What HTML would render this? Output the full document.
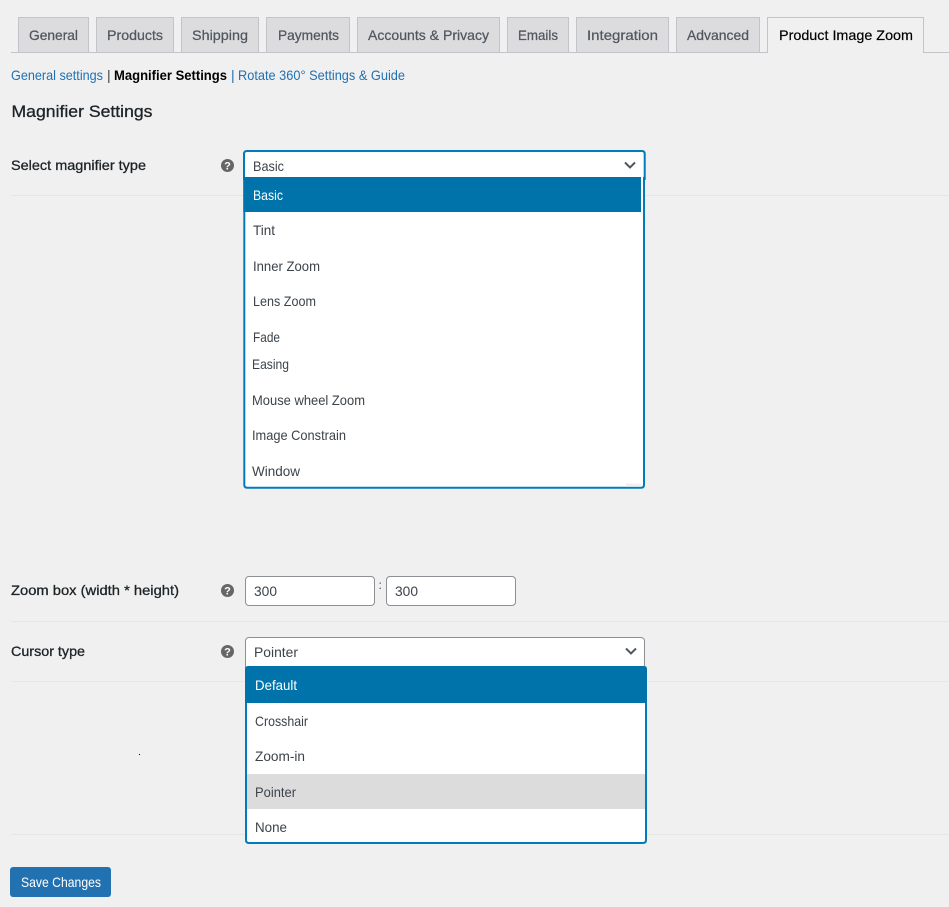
<!DOCTYPE html>
<html lang="en">
<head>
<meta charset="utf-8">
<title>Magnifier Settings</title>
<style>
html,body{margin:0;padding:0;background:#f0f0f1;}
body{width:949px;height:907px;overflow:hidden;}
svg{display:block;}
text{font-family:"Liberation Sans",sans-serif;font-size:14px;fill:#3c434a;}
.tab{fill:#50575e;font-weight:400;stroke:#50575e;stroke-width:.25;}
.tabbox{fill:#dcdcde;stroke:#c3c4c7;stroke-width:1;}
.lnk{fill:#2271b1;}
.lbl{fill:#1d2327;stroke:#1d2327;stroke-width:.3;}
.help{fill:#fff;font-size:11px;font-weight:700;}
.row{stroke:#e6e6e7;stroke-width:1;}
</style>
</head>
<body>
<svg width="949" height="907" viewBox="0 0 949 907" xmlns="http://www.w3.org/2000/svg">
<rect width="949" height="907" fill="#f0f0f1"/>

<!-- tabs -->
<line x1="11" y1="52.5" x2="949" y2="52.5" stroke="#c3c4c7"/>
<rect class="tabbox" x="18.5" y="17.5" width="70" height="35"/>
<rect class="tabbox" x="96.5" y="17.5" width="77" height="35"/>
<rect class="tabbox" x="181.5" y="17.5" width="77" height="35"/>
<rect class="tabbox" x="266.5" y="17.5" width="83" height="35"/>
<rect class="tabbox" x="357.5" y="17.5" width="142" height="35"/>
<rect class="tabbox" x="507.5" y="17.5" width="61" height="35"/>
<rect class="tabbox" x="576.5" y="17.5" width="92" height="35"/>
<rect class="tabbox" x="676.5" y="17.5" width="83" height="35"/>
<path d="M767.5 53V17.5H923.5V53" fill="#f0f0f1" stroke="#c3c4c7"/>
<rect x="768" y="50" width="155" height="4" fill="#f0f0f1"/>
<text class="tab" x="29" y="40" textLength="49" lengthAdjust="spacingAndGlyphs">General</text>
<text class="tab" x="107" y="40" textLength="56" lengthAdjust="spacingAndGlyphs">Products</text>
<text class="tab" x="192" y="40" textLength="56" lengthAdjust="spacingAndGlyphs">Shipping</text>
<text class="tab" x="278" y="40" textLength="61" lengthAdjust="spacingAndGlyphs">Payments</text>
<text class="tab" x="368" y="40" textLength="121" lengthAdjust="spacingAndGlyphs">Accounts &amp; Privacy</text>
<text class="tab" x="518" y="40" textLength="40" lengthAdjust="spacingAndGlyphs">Emails</text>
<text class="tab" x="587" y="40" textLength="71" lengthAdjust="spacingAndGlyphs">Integration</text>
<text class="tab" x="687" y="40" textLength="62" lengthAdjust="spacingAndGlyphs">Advanced</text>
<text x="779" y="40" textLength="134" lengthAdjust="spacingAndGlyphs" style="fill:#000;stroke:#000;stroke-width:.2">Product Image Zoom</text>

<!-- subnav -->
<text class="lnk" x="11" y="80" textLength="92" lengthAdjust="spacingAndGlyphs">General settings</text>
<text x="107" y="80" fill="#50575e">|</text>
<text x="114" y="80" textLength="113" lengthAdjust="spacingAndGlyphs" style="fill:#000;font-weight:700">Magnifier Settings</text>
<text x="231" y="80" class="lnk">|</text>
<text class="lnk" x="238" y="80" textLength="167" lengthAdjust="spacingAndGlyphs">Rotate 360° Settings &amp; Guide</text>

<!-- heading -->
<text x="11.5" y="117" textLength="141" lengthAdjust="spacingAndGlyphs" style="font-size:17px;fill:#1d2327;stroke:#1d2327;stroke-width:.3">Magnifier Settings</text>

<!-- row separators -->
<line class="row" x1="11" y1="195.5" x2="949" y2="195.5"/>
<line class="row" x1="11" y1="621.5" x2="949" y2="621.5"/>
<line class="row" x1="11" y1="681.5" x2="949" y2="681.5"/>
<line class="row" x1="11" y1="834.5" x2="949" y2="834.5"/>

<!-- row 1 -->
<text class="lbl" x="11" y="170" textLength="135" lengthAdjust="spacingAndGlyphs">Select magnifier type</text>
<circle cx="227.5" cy="165.5" r="6.5" fill="#666"/>
<text class="help" x="227.5" y="169.5" text-anchor="middle">?</text>

<!-- dropdown 1 -->
<path d="M244 180V154Q244 151 247 151H642Q644.700 151 644.700 154V180" fill="#fff" stroke="#007cba" stroke-width="2"/>
<path d="M244.300 177V484.700Q244.300 487.700 247.300 487.700H641Q644 487.700 644 484.700V177" fill="#fff" stroke="#007cba" stroke-width="2"/>
<rect x="243.300" y="177" width="397.700" height="35" fill="#0073aa"/>
<rect x="626" y="483.500" width="15.500" height="3.200" fill="#f0f0f1"/>
<text x="253" y="171" textLength="31" lengthAdjust="spacingAndGlyphs">Basic</text>
<path d="M625 162.500L630 167.500L635 162.500" fill="none" stroke="#50575e" stroke-width="2"/>
<text x="253" y="200" textLength="30" lengthAdjust="spacingAndGlyphs" style="fill:#fff">Basic</text>
<text x="253" y="235" textLength="22" lengthAdjust="spacingAndGlyphs">Tint</text>
<text x="253" y="271" textLength="67" lengthAdjust="spacingAndGlyphs">Inner Zoom</text>
<text x="253" y="306" textLength="63" lengthAdjust="spacingAndGlyphs">Lens Zoom</text>
<text x="253" y="342" textLength="27" lengthAdjust="spacingAndGlyphs">Fade</text>
<text x="252" y="369" textLength="37" lengthAdjust="spacingAndGlyphs">Easing</text>
<text x="252" y="405" textLength="113" lengthAdjust="spacingAndGlyphs">Mouse wheel Zoom</text>
<text x="252" y="440" textLength="94" lengthAdjust="spacingAndGlyphs">Image Constrain</text>
<text x="252" y="476" textLength="48" lengthAdjust="spacingAndGlyphs">Window</text>

<!-- row 2 -->
<text class="lbl" x="11" y="595" textLength="168" lengthAdjust="spacingAndGlyphs">Zoom box (width * height)</text>
<circle cx="227.5" cy="590.5" r="6.5" fill="#666"/>
<text class="help" x="227.5" y="594.5" text-anchor="middle">?</text>
<rect x="245.500" y="576.500" width="129" height="29" rx="3.500" fill="#fff" stroke="#8c8f94"/>
<rect x="386.500" y="576.500" width="129" height="29" rx="3.500" fill="#fff" stroke="#8c8f94"/>
<text x="254" y="596" textLength="23" lengthAdjust="spacingAndGlyphs">300</text>
<text x="395" y="596" textLength="23" lengthAdjust="spacingAndGlyphs">300</text>
<text x="378.500" y="589" style="font-size:12px">:</text>

<!-- row 3 -->
<text class="lbl" x="11" y="656" textLength="74" lengthAdjust="spacingAndGlyphs">Cursor type</text>
<circle cx="227.5" cy="651.5" r="6.5" fill="#666"/>
<text class="help" x="227.5" y="655.5" text-anchor="middle">?</text>
<rect x="245.500" y="637.500" width="399" height="33" rx="3.500" fill="#fff" stroke="#8c8f94"/>
<text x="254" y="657" textLength="44" lengthAdjust="spacingAndGlyphs">Pointer</text>
<path d="M626 648.500L631 653.500L636 648.500" fill="none" stroke="#50575e" stroke-width="2"/>

<!-- dropdown 2 -->
<path d="M246 670V840Q246 843 249 843H643Q646 843 646 840V670" fill="#fff" stroke="#007cba" stroke-width="2"/>
<path d="M245 703V669Q245 666 248 666H644Q647 666 647 669V703Z" fill="#0073aa"/>
<rect x="247" y="774" width="398" height="35" fill="#dcdcdc"/>
<text x="255" y="690" textLength="42" lengthAdjust="spacingAndGlyphs" style="fill:#fff">Default</text>
<text x="255" y="726" textLength="53" lengthAdjust="spacingAndGlyphs">Crosshair</text>
<text x="255" y="761" textLength="50" lengthAdjust="spacingAndGlyphs">Zoom-in</text>
<text x="255" y="797" textLength="41" lengthAdjust="spacingAndGlyphs">Pointer</text>
<text x="255" y="832" textLength="32" lengthAdjust="spacingAndGlyphs">None</text>

<!-- stray dot -->
<rect x="139" y="754" width="1" height="1" fill="#000"/>

<!-- save -->
<rect x="10" y="867" width="101" height="30" rx="3" fill="#2271b1"/>
<text x="21" y="887" textLength="80" lengthAdjust="spacingAndGlyphs" style="fill:#fff">Save Changes</text>
</svg>
</body>
</html>
